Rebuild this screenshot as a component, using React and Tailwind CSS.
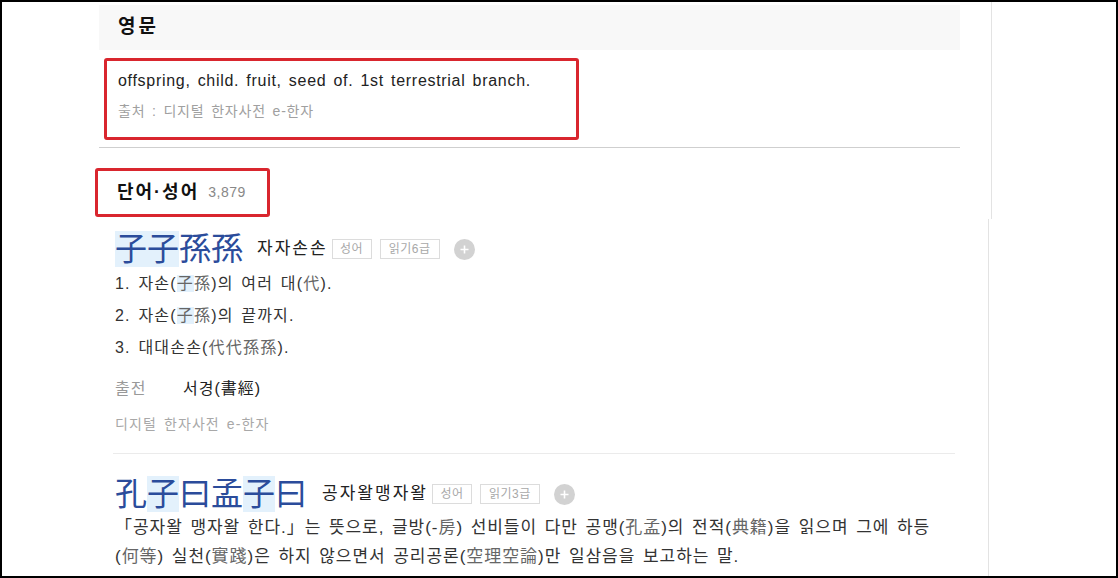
import React from 'react';

const KR = { fontFamily: '"Liberation Sans", "Noto Sans CJK KR", sans-serif' };

const PlusButton = () => (
  <span className="ml-[14px] flex h-[21px] w-[21px] items-center justify-center rounded-full bg-[#d2d2d2]">
    <svg width="11" height="11" viewBox="0 0 11 11">
      <path d="M5.5 1.5v8M1.5 5.5h8" stroke="#fff" strokeWidth="1.6" />
    </svg>
  </span>
);

const Tag = ({ children, w }) => (
  <span className={`flex h-[20px] ${w} items-center justify-center border border-[#dcdcdc] text-[12px] tracking-[0.5px] text-[#a8a8a8]`}>
    {children}
  </span>
);

const Hl = ({ children }) => <span className="bg-[#e3f1fc]">{children}</span>;
const Hj = ({ children }) => <span className="text-[#666]">{children}</span>;

const App = () => {
  return (
    <div
      className="flex h-[578px] w-[1118px] overflow-hidden border-2 border-black bg-white text-[#222]"
      style={KR}
    >
      {/* 본문 */}
      <main className="ml-[97px] flex w-[861px] shrink-0 flex-col">
        <div className="mt-[3px] flex h-[45px] items-center bg-[#f8f8f8] pl-[19px] text-[19px] font-bold tracking-[3px] text-[#111]">
          영문
        </div>

        <div className="ml-[5px] mt-[8px] h-[82px] w-[475px] rounded-[3px] border-[3px] border-[#d9262e] pl-[11px] pt-[10px]">
          <p className="text-[16px] leading-[20px] tracking-[0.7px] text-[#222] [word-spacing:2px]">
            offspring, child. fruit, seed of. 1st terrestrial branch.
          </p>
          <p className="mt-[10px] text-[14px] leading-[20px] tracking-[0.8px] text-[#a0a0a0] [word-spacing:2px]">
            출처 : 디지털 한자사전 e-한자
          </p>
        </div>

        <div className="mt-[7px] h-px bg-[#cfcfcf]" />

        <div className="-ml-[4px] mt-[20px] flex h-[49px] w-[175px] items-center rounded-[3px] border-[3px] border-[#d9262e] pl-[19px]">
          <span className="text-[18px] font-bold tracking-[2px] text-[#111]">단어·성어</span>
          <span className="ml-[9px] text-[14px] tracking-[0.5px] text-[#888]">3,879</span>
        </div>

        {/* 子子孫孫 */}
        <section className="ml-[16px] mt-[13px] flex flex-col">
          <div className="flex h-[38px] items-center">
            <span className="text-[32px] leading-[38px] text-[#2b4c9b]">
              <Hl>子子</Hl>孫孫
            </span>
            <span className="ml-[14px] text-[17px] tracking-[2px]">자자손손</span>
            <span className="ml-[4px] flex gap-[8px]">
              <Tag w="w-[40px]">성어</Tag>
              <Tag w="w-[60px]">읽기6급</Tag>
            </span>
            <PlusButton />
          </div>
          <ol className="text-[16px] leading-[32px] tracking-[1.2px] text-[#333] [word-spacing:2px]">
            <li>1. 자손(<Hl><Hj>子</Hj></Hl><Hj>孫</Hj>)의 여러 대(<Hj>代</Hj>).</li>
            <li>2. 자손(<Hl><Hj>子</Hj></Hl><Hj>孫</Hj>)의 끝까지.</li>
            <li>3. 대대손손(<Hj>代代孫孫</Hj>).</li>
          </ol>
          <div className="mt-[13px] flex text-[16px] leading-[24px] tracking-[1px]">
            <span className="w-[68px] text-[#999]">출전</span>
            <span className="text-[#222]">서경(書經)</span>
          </div>
          <p className="mt-[13px] text-[14px] leading-[20px] tracking-[1.1px] text-[#a8a8a8] [word-spacing:2px]">
            디지털 한자사전 e-한자
          </p>
        </section>

        <div className="ml-[14px] mr-[5px] mt-[19px] h-px bg-[#ebebeb]" />

        {/* 孔子曰孟子曰 */}
        <section className="ml-[16px] mt-[21px] flex flex-col">
          <div className="flex h-[38px] items-center">
            <span className="text-[32px] leading-[38px] text-[#2b4c9b]">
              孔<Hl>子</Hl>曰孟<Hl>子</Hl>曰
            </span>
            <span className="ml-[15px] text-[17px] tracking-[2px]">공자왈맹자왈</span>
            <span className="ml-[4px] flex gap-[8px]">
              <Tag w="w-[40px]">성어</Tag>
              <Tag w="w-[60px]">읽기3급</Tag>
            </span>
            <PlusButton />
          </div>
          <p className="text-[17px] leading-[29px] tracking-[0.95px] text-[#333] [word-spacing:2px]">
            <span className="block whitespace-nowrap">
              「공자왈 맹자왈 한다.」는 뜻으로, 글방(-<Hj>房</Hj>) 선비들이 다만 공맹(<Hj>孔孟</Hj>)의 전적(<Hj>典籍</Hj>)을 읽으며 그에 하등
            </span>
            <span className="block whitespace-nowrap">
              (<Hj>何等</Hj>) 실천(<Hj>實踐</Hj>)은 하지 않으면서 공리공론(<Hj>空理空論</Hj>)만 일삼음을 보고하는 말.
            </span>
          </p>
        </section>
      </main>

      {/* 오른쪽 구분선 */}
      <aside className="ml-[31px] flex flex-col">
        <div className="h-[217px] w-px bg-[#e3e3e3]" />
        <div className="-ml-[3px] w-px flex-1 bg-[#e3e3e3]" />
      </aside>
    </div>
  );
};

export default App;
